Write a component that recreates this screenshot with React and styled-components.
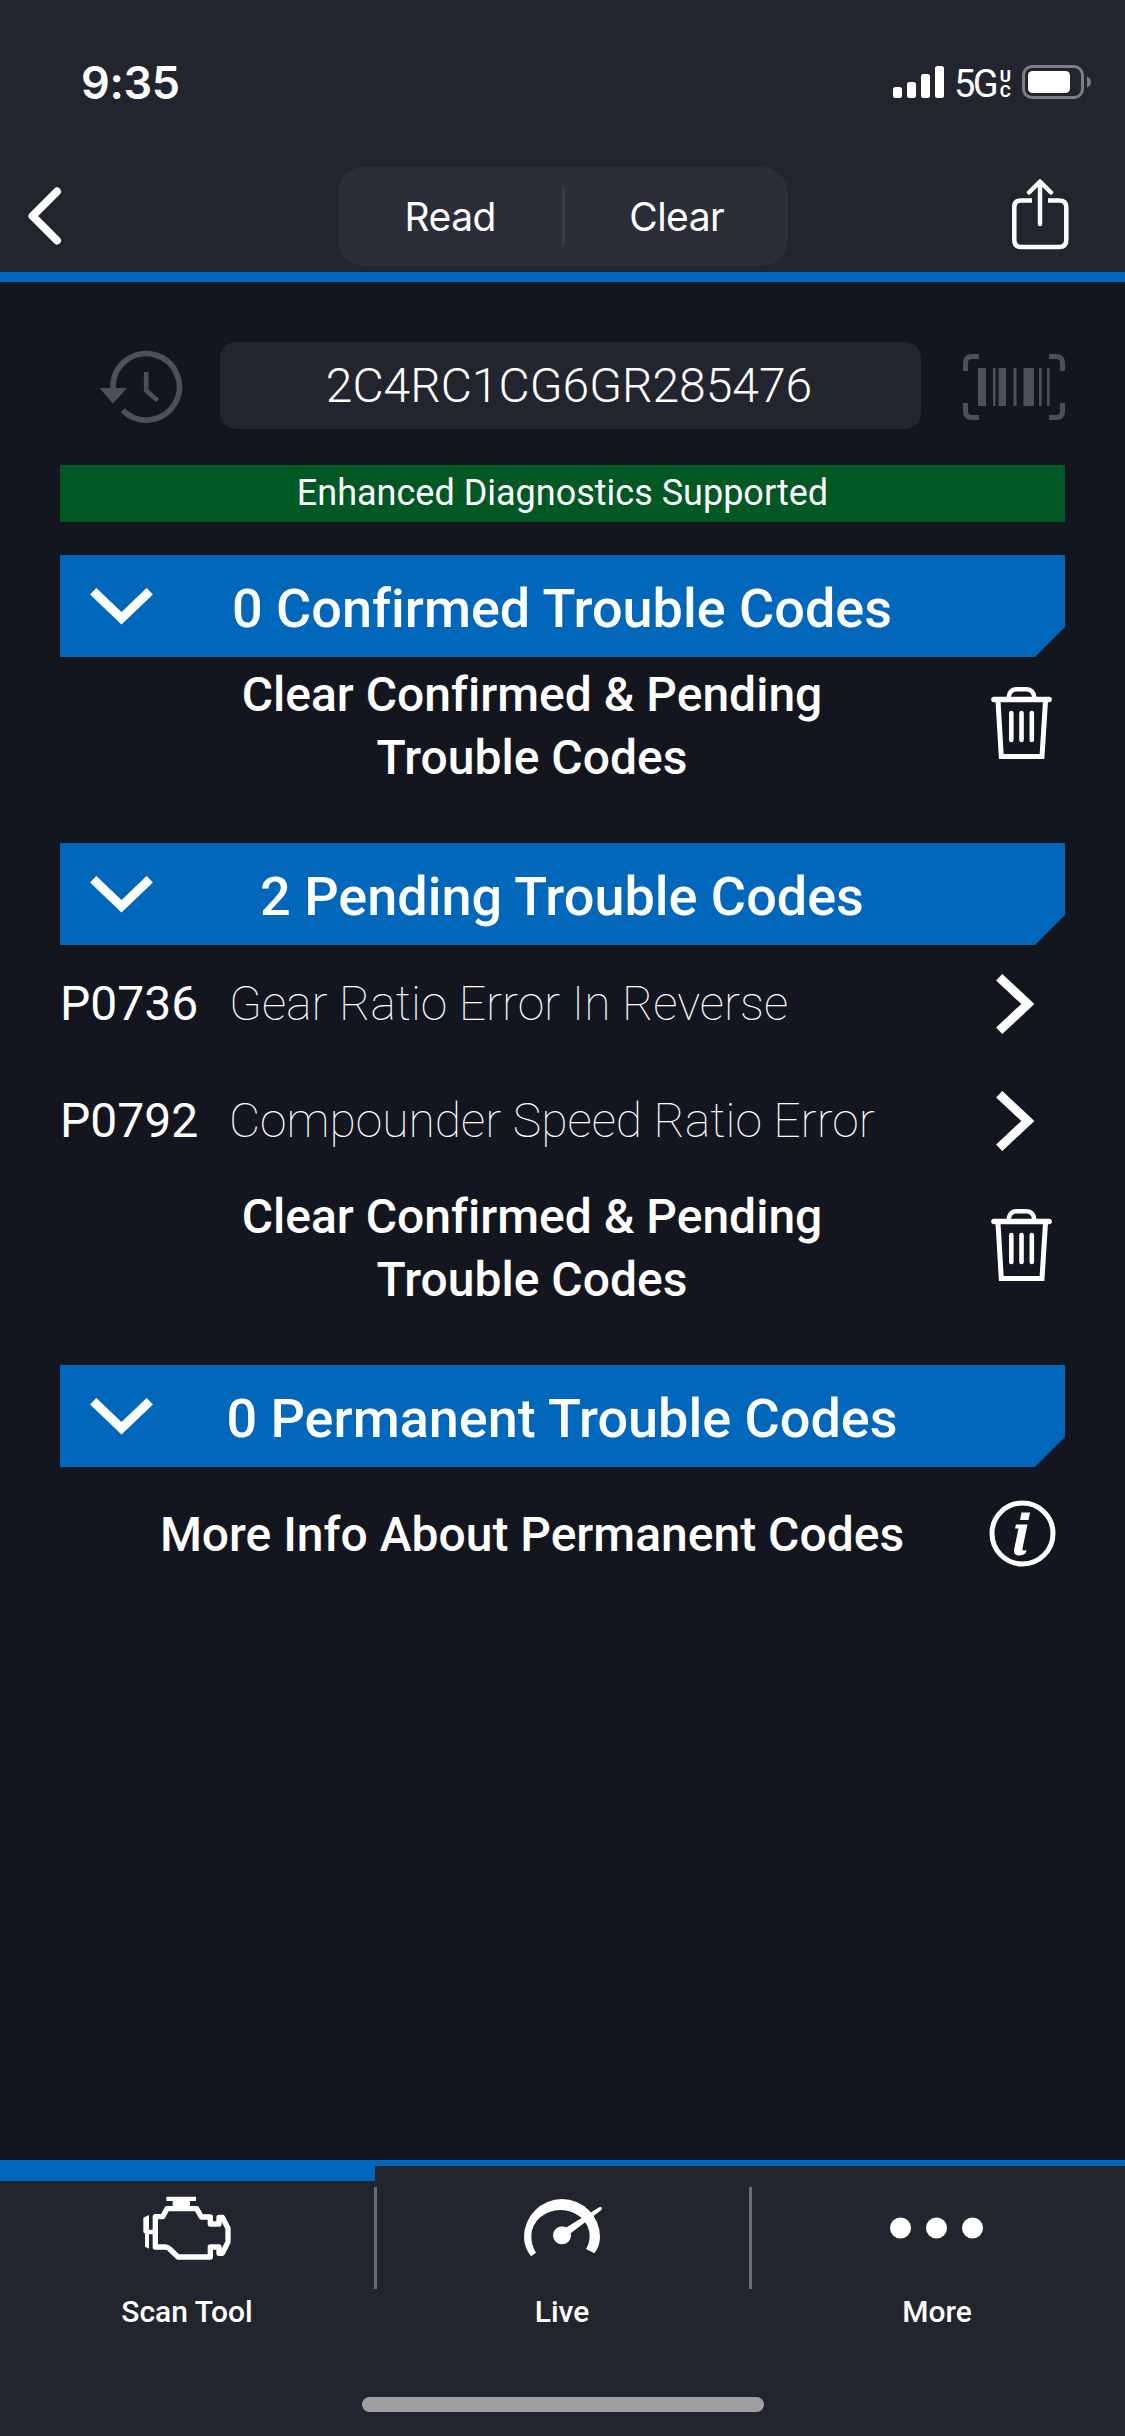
import React from 'react';
import styled, { createGlobalStyle } from 'styled-components';

const GlobalStyle = createGlobalStyle`
  body {
    margin: 0;
    background: #13161f;
  }
`;

const Screen = styled.div`
  width: 1125px;
  height: 2436px;
  display: flex;
  flex-direction: column;
  overflow: hidden;
  background: #13161f;
  color: #fff;
  font-family: Roboto, 'Liberation Sans', sans-serif;
  font-variant-ligatures: none;

  svg {
    display: block;
    flex: none;
  }
`;

const Header = styled.header`
  box-sizing: border-box;
  height: 282px;
  background: #22252d;
  border-bottom: 10px solid #0067bb;
  font-family: Inter, 'Liberation Sans', sans-serif;
`;

const StatusBar = styled.div`
  box-sizing: border-box;
  height: 164px;
  padding: 0 34px 0 81px;
  display: flex;
  align-items: center;
  justify-content: space-between;
`;

const Clock = styled.div`
  padding-top: 2px;
  font-size: 45px;
  font-weight: 600;
  line-height: 54px;
  letter-spacing: -0.3px;
`;

const StatusIcons = styled.div`
  display: flex;
  align-items: center;
`;

const Network = styled.div`
  width: 57px;
  display: flex;
  align-items: center;
  justify-content: space-between;
  margin: 3px 11px 0 10px;
  font-family: Roboto, 'Liberation Sans', sans-serif;
  font-size: 38px;
  line-height: 36px;
  letter-spacing: -2.5px;
`;

const NetworkSuffix = styled.span`
  display: flex;
  flex-direction: column;
  font-size: 17px;
  font-weight: 700;
  line-height: 15px;
  letter-spacing: 0;
`;

const NavBar = styled.div`
  box-sizing: border-box;
  height: 108px;
  padding: 3px 56px 0 26px;
  display: grid;
  grid-template-columns: 312px 450px 1fr;
  align-items: start;
`;

const BackButton = styled.div`
  padding-top: 20px;
`;

const ShareButton = styled.div`
  padding-top: 11px;
  justify-self: end;
`;

const Segments = styled.div`
  height: 99px;
  display: grid;
  grid-template-columns: 1fr 3px 1fr;
  align-items: center;
  border-radius: 26px;
  background: #2b2e38;
`;

const Segment = styled.div`
  padding-left: 1px;
  text-align: center;
  font-size: 39px;
  font-weight: 400;
  line-height: 48px;
  letter-spacing: -0.5px;
`;

const SegmentDivider = styled.div`
  height: 57px;
  background: #3a3d46;
`;

const Content = styled.main`
  flex: 1;
  padding: 60px 60px 0;
`;

const VinRow = styled.div`
  height: 87px;
  display: flex;
  align-items: center;
`;

const HistoryIconBox = styled.div`
  width: 160px;
  padding: 2px 0 0 38px;
  box-sizing: border-box;
`;

const VinField = styled.div`
  box-sizing: border-box;
  width: 701px;
  height: 87px;
  margin-right: 42px;
  padding-right: 3px;
  border-radius: 16px;
  background: #22252d;
  text-align: center;
  font-size: 48px;
  font-weight: 300;
  line-height: 87px;
`;

const BarcodeIconBox = styled.div`
  padding-top: 3px;
`;

const SupportBanner = styled.div`
  height: 57px;
  margin: 36px 0 33px;
  background: #005824;
  text-align: center;
  font-size: 36px;
  line-height: 57px;
`;

const SectionHeader = styled.div`
  height: 102px;
  display: grid;
  grid-template-columns: 93px 1fr 124px;
  align-items: center;
  padding-left: 30px;
  background: #0067bb;
  clip-path: polygon(
    0 0,
    100% 0,
    100% calc(100% - 30px),
    calc(100% - 30px) 100%,
    0 100%
  );
`;

const SectionTitle = styled.div`
  text-align: center;
  font-size: 54px;
  font-weight: 500;
  line-height: 64px;
  padding-top: 5px;
  white-space: nowrap;
`;

const CodeRow = styled.div`
  height: 117px;
  display: flex;
  align-items: center;
  padding-right: 30px;
  font-size: 48px;
  line-height: 56px;
`;

const Code = styled.div`
  width: 169px;
`;

const Description = styled.div`
  flex: 1;
  font-weight: 100;
`;

const ActionRow = styled.div`
  height: 132px;
  margin-bottom: 54px;
  display: grid;
  grid-template-columns: 1fr 87px;
  align-items: center;
  justify-items: center;
`;

const ActionText = styled.div`
  max-width: 750px;
  padding: ${props => (props.$singleLine ? 3 : 6)}px 0 0 26px;
  text-align: center;
  font-size: 48px;
  font-weight: 500;
  line-height: 63px;
`;

const TabBar = styled.nav`
  height: 276px;
  box-sizing: border-box;
  border-top: 6px solid #0067bb;
  background: #22252d;
  display: flex;
  flex-direction: column;
  justify-content: space-between;
  align-items: center;
`;

const Tabs = styled.div`
  width: 100%;
  display: grid;
  grid-template-columns: repeat(3, 1fr);
`;

const Tab = styled.div`
  box-sizing: border-box;
  height: 180px;
  border-top: 15px solid ${props => (props.$active ? '#0067bb' : 'transparent')};
  display: grid;
  grid-template-columns: 1fr 1px;
`;

const TabBody = styled.div`
  display: flex;
  flex-direction: column;
  align-items: center;
  padding-top: 12px;
`;

const TabIcon = styled.div`
  height: 70px;
  padding-right: 1px;
  display: flex;
  align-items: center;
  justify-content: center;
`;

const TabLabel = styled.div`
  margin-top: 31px;
  font-size: 30px;
  font-weight: 500;
  line-height: 36px;
`;

const TabDivider = styled.div`
  width: 3px;
  height: 102px;
  margin-top: 6px;
  background: ${props => (props.$hidden ? 'transparent' : '#6b6d71')};
`;

const HomeIndicator = styled.div`
  width: 402px;
  height: 15px;
  margin-bottom: 24px;
  border-radius: 8px;
  background: #a09fa0;
`;

const SignalIcon = () => (
  <svg width="51" height="33" fill="#fff">
    <rect x="0" y="21" width="9" height="11" rx="2.5" />
    <rect x="14" y="16" width="9" height="16" rx="2.5" />
    <rect x="28" y="8" width="9" height="24" rx="2.5" />
    <rect x="42" y="0" width="9" height="32" rx="2.5" />
  </svg>
);

const BatteryIcon = () => (
  <svg width="69" height="34">
    <rect x="1.5" y="1.5" width="59" height="31" rx="8.5" fill="none" stroke="#7c7e83" strokeWidth="3" />
    <rect x="6" y="6" width="42" height="22" rx="4.5" fill="#fff" />
    <path d="M65 11.5Q69 13 69 17T65 22.5Z" fill="#7c7e83" />
  </svg>
);

const BackIcon = () => (
  <svg width="36" height="58" fill="none" stroke="#fff" strokeWidth="8" strokeLinecap="round" strokeLinejoin="round">
    <path d="M31 4.5L6.5 29L31 53.5" />
  </svg>
);

const ShareIcon = () => (
  <svg width="59" height="72" fill="none" stroke="#fff" strokeWidth="4.5" strokeLinecap="round" strokeLinejoin="round">
    <path
      d="M22 22.5H11Q4.3 22.5 4.3 29V62Q4.3 69 11 69H49Q56.3 69 56.3 62V29Q56.3 22.5 49 22.5H38"
      strokeLinecap="butt"
    />
    <path d="M30 46V4M19 14.5L30 3.5L41 14.5" />
  </svg>
);

const HistoryIcon = () => (
  <svg width="86" height="74" viewBox="98 350 86 74" fill="none" stroke="#4d5059">
    <path d="M113 390V387A33.2 33.2 0 1 1 122.7 410.3" strokeWidth="5.6" />
    <path d="M146.2 372V390.5L157.5 400.5" strokeWidth="4.6" />
    <path d="M99.5 388H127L113 403.5Z" fill="#4d5059" stroke="none" />
  </svg>
);

const BarcodeIcon = () => (
  <svg width="102" height="66" fill="#4d5059">
    <path
      d="M16 2.5H9Q2.5 2.5 2.5 9V17M86 2.5H93Q99.5 2.5 99.5 9V17M16 63.5H9Q2.5 63.5 2.5 57V49M86 63.5H93Q99.5 63.5 99.5 57V49"
      fill="none"
      stroke="#4d5059"
      strokeWidth="5"
    />
    <path d="M15 14h8v38h-8zM30 14h2.5v38H30zM35.5 14h7.5v38h-7.5zM50.5 14h3v38h-3zM60.5 14h10.5v38H60.5zM76 14h2.7v38H76zM84 14h2.6v38H84z" />
  </svg>
);

const ChevronDown = () => (
  <svg width="63" height="37" fill="none" stroke="#fff" strokeWidth="9">
    <path d="M3.2 3.2L31.5 30.3L59.8 3.2" />
  </svg>
);

const ChevronRight = () => (
  <svg width="39" height="60" fill="none" stroke="#fff" strokeWidth="9">
    <path d="M3.2 3.2L31.8 30L3.2 56.8" />
  </svg>
);

const TrashIcon = () => (
  <svg width="61" height="72" fill="none" stroke="#fff" strokeLinecap="round">
    <path d="M3 12.5H58" strokeWidth="5.6" />
    <path d="M17.5 11Q18.5 2.3 25 2.3H35.5Q42.5 2.3 43.5 11" strokeWidth="4.4" />
    <path d="M7 14L10.3 69.5H51L54.5 14" strokeWidth="5" strokeLinecap="butt" />
    <path d="M20.3 26V53M30.5 26V53M40.8 26V53" strokeWidth="4.6" />
  </svg>
);

const InfoIcon = () => (
  <svg width="69" height="67" viewBox="-2 0 69 67" fill="#fff">
    <circle cx="33.5" cy="33.5" r="30.5" fill="none" stroke="#fff" strokeWidth="5" />
    <path d="M32.5 12.5H41L39.5 20H31Z" />
    <path d="M27 24.5H38.5L33.5 48.5Q33 51 36 50.5L37.5 50L36.5 53.5Q33 56 29 55.5Q24 55 25.2 49L29.5 28.5H26Z" />
  </svg>
);

const EngineIcon = () => (
  <svg width="90" height="70" viewBox="425 160 270 210" fill="#fff">
    <path d="M498 171H587V184H569V204H517V184H498Z" />
    <path d="M429 234L446 226V270H458V284H446V327L434 321V282L429 278Z" />
    <path
      d="M465 231H487L500 207H589L603 232H630V253H656V233H666L683 266V307L666 341H656V322H630V352H533L508 328Q502 322 495 322H465Z"
      fill="none"
      stroke="#fff"
      strokeWidth="16"
      strokeLinejoin="round"
    />
  </svg>
);

const GaugeIcon = () => (
  <svg width="84" height="64" viewBox="27 20 252 192" fill="#fff">
    <path d="M60 201Q39 174 39 143A114 114 0 0 1 267 143Q267 170 250 192L225 179Q236 160 236 140A87.5 78 0 0 0 61 140Q61 168 75 190Z" />
    <circle cx="153" cy="138" r="27" />
    <path d="M163 116L266 53Q271 52 273 57L271 62L176 134Z" />
  </svg>
);

const DotsIcon = () => (
  <svg width="93" height="22" fill="#fff">
    <circle cx="10.5" cy="11" r="10.5" />
    <circle cx="46.5" cy="11" r="10.5" />
    <circle cx="82.5" cy="11" r="10.5" />
  </svg>
);

const pendingCodes = [
  { code: 'P0736', description: 'Gear Ratio Error In Reverse' },
  { code: 'P0792', description: 'Compounder Speed Ratio Error' }
];

const tabs = [
  { label: 'Scan Tool', Icon: EngineIcon, active: true },
  { label: 'Live', Icon: GaugeIcon },
  { label: 'More', Icon: DotsIcon }
];

function Section({ title, children }) {
  return (
    <section>
      <SectionHeader>
        <ChevronDown />
        <SectionTitle>{title}</SectionTitle>
      </SectionHeader>
      {children}
    </section>
  );
}

function ClearCodes() {
  return (
    <ActionRow>
      <ActionText>
        Clear Confirmed &amp; Pending
        <br />
        Trouble Codes
      </ActionText>
      <TrashIcon />
    </ActionRow>
  );
}

export default function App() {
  return (
    <>
      <GlobalStyle />
      <Screen>
        <Header>
          <StatusBar>
            <Clock>9:35</Clock>
            <StatusIcons>
              <SignalIcon />
              <Network>
                5G
                <NetworkSuffix>
                  <span>U</span>
                  <span>C</span>
                </NetworkSuffix>
              </Network>
              <BatteryIcon />
            </StatusIcons>
          </StatusBar>
          <NavBar>
            <BackButton>
              <BackIcon />
            </BackButton>
            <Segments>
              <Segment>Read</Segment>
              <SegmentDivider />
              <Segment>Clear</Segment>
            </Segments>
            <ShareButton>
              <ShareIcon />
            </ShareButton>
          </NavBar>
        </Header>
        <Content>
          <VinRow>
            <HistoryIconBox>
              <HistoryIcon />
            </HistoryIconBox>
            <VinField>2C4RC1CG6GR285476</VinField>
            <BarcodeIconBox>
              <BarcodeIcon />
            </BarcodeIconBox>
          </VinRow>
          <SupportBanner>Enhanced Diagnostics Supported</SupportBanner>
          <Section title="0 Confirmed Trouble Codes">
            <ClearCodes />
          </Section>
          <Section title="2 Pending Trouble Codes">
            {pendingCodes.map(({ code, description }) => (
              <CodeRow key={code}>
                <Code>{code}</Code>
                <Description>{description}</Description>
                <ChevronRight />
              </CodeRow>
            ))}
            <ClearCodes />
          </Section>
          <Section title="0 Permanent Trouble Codes">
            <ActionRow>
              <ActionText $singleLine>More Info About Permanent Codes</ActionText>
              <InfoIcon />
            </ActionRow>
          </Section>
        </Content>
        <TabBar>
          <Tabs>
            {tabs.map(({ label, Icon, active }, index) => (
              <Tab key={label} $active={active}>
                <TabBody>
                  <TabIcon>
                    <Icon />
                  </TabIcon>
                  <TabLabel>{label}</TabLabel>
                </TabBody>
                <TabDivider $hidden={index === tabs.length - 1} />
              </Tab>
            ))}
          </Tabs>
          <HomeIndicator />
        </TabBar>
      </Screen>
    </>
  );
}
